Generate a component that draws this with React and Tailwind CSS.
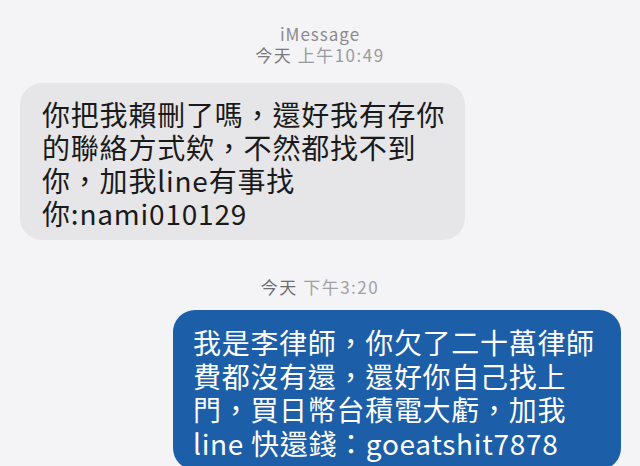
import React from "react";

const cjk = { fontFamily: '"Noto Sans CJK TC", "Noto Sans", sans-serif' };

const App = () => {
  return (
    <div
      className="w-[640px] h-[466px] overflow-hidden bg-[#f4f4f6] flex flex-col pt-[24px]"
      style={cjk}
    >
      {/* header */}
      <div className="text-center text-[17px] leading-[20px] text-[#8a8a8e] tracking-[1px]">
        iMessage
      </div>
      <div className="text-center text-[17px] leading-[20px] mt-[1px] text-[#9a9a9e] tracking-[1.5px]">
        <span className="text-[#7a7a7e]">今天</span> 上午10:49
      </div>

      {/* incoming */}
      <div className="ml-[20px] mt-[18px] w-[445px] h-[157px] shrink-0 rounded-[22px] bg-[#e6e6e8] pl-[22px] pr-[14px] pt-[15px] text-[28px] leading-[33px] tracking-[0.8px] text-[#1a1a1a]">
        你把我賴刪了嗎，還好我有存你
        <br />
        的聯絡方式欸，不然都找不到
        <br />
        你，加我line有事找
        <br />
        你:nami010129
      </div>

      {/* timestamp */}
      <div className="text-center text-[17px] leading-[20px] mt-[37px] text-[#a0a0a4] tracking-[1.5px]">
        <span className="text-[#6e6e72]">今天</span> 下午3:20
      </div>

      {/* outgoing */}
      <div className="ml-auto mr-[19px] mt-[13px] w-[448px] h-[160px] shrink-0 rounded-[22px] bg-[#1c5ea8] pl-[20px] pr-[10px] pt-[16px] text-[28px] leading-[33.5px] tracking-[0.7px] text-white">
        我是李律師，你欠了二十萬律師
        <br />
        費都沒有還，還好你自己找上
        <br />
        門，買日幣台積電大虧，加我
        <br />
        line 快還錢：goeatshit7878
      </div>
    </div>
  );
};

export default App;
